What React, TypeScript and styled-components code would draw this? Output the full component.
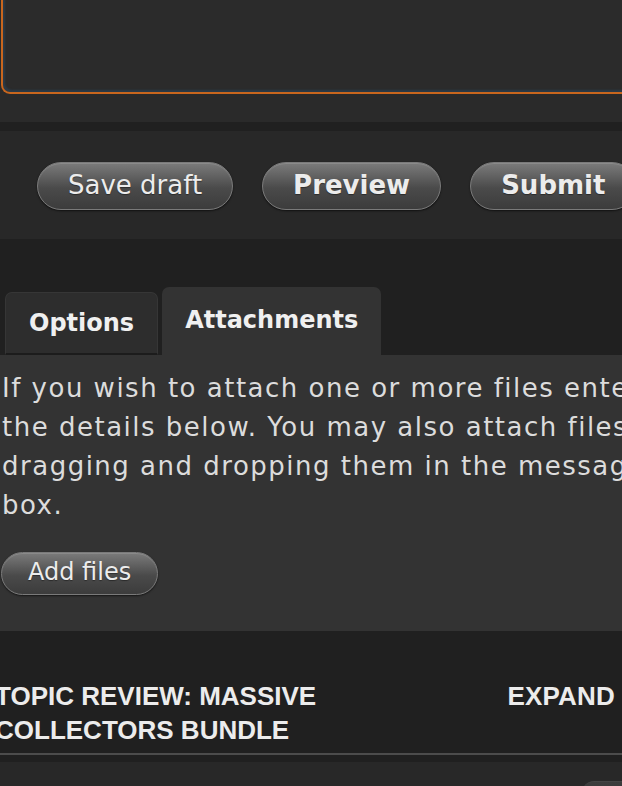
import React from "react";
import styled, { createGlobalStyle } from "styled-components";

const GlobalStyle = createGlobalStyle`
  html, body {
    margin: 0;
    padding: 0;
    background: #202020;
    overflow: hidden;
  }
`;

const Page = styled.div`
  width: 660px;
  background: #202020;
  font-family: "DejaVu Sans", Verdana, sans-serif;
  color: #e6e6e6;
`;

const EditorPanel = styled.div`
  background: #2a2a2a;
  padding: 0 0 28px 1px;
`;

const MessageBox = styled.div`
  height: 92px;
  background: #2b2b2b;
  border: 2px solid #c8661e;
  border-top: 0;
  border-radius: 0 0 0 9px;
  box-shadow: inset 2px -2px 2px rgba(40, 90, 130, 0.35);
`;

const ButtonBar = styled.div`
  margin-top: 9px;
  background: #282828;
  height: 108px;
  box-sizing: border-box;
  display: flex;
  align-items: center;
  gap: 29px;
  padding: 2px 0 0 37px;
`;

const PillButton = styled.button<{ $bold?: boolean; $small?: boolean }>`
  font-family: "DejaVu Sans", Verdana, sans-serif;
  font-size: ${(p) => (p.$small ? 24 : 26)}px;
  font-weight: ${(p) => (p.$bold ? 700 : 400)};
  color: #ececec;
  line-height: 1.15;
  padding: ${(p) => (p.$small ? "6px 26px 7px" : "8px 30px 9px")};
  border-radius: 999px;
  border: 1px solid #7a7a7a;
  background: linear-gradient(#7b7b7b, #4a4a4a 55%, #3c3c3c);
  box-shadow: 0 1px 2px rgba(0, 0, 0, 0.6), inset 0 1px 0 rgba(255, 255, 255, 0.12);
  text-shadow: 0 1px 1px rgba(0, 0, 0, 0.4);
  cursor: pointer;
  white-space: nowrap;
`;

const TabStrip = styled.div`
  display: flex;
  align-items: flex-end;
  gap: 4px;
  padding: 48px 0 0 5px;
`;

const Tab = styled.div<{ $active?: boolean }>`
  font-size: 24px;
  font-weight: 700;
  color: #f0f0f0;
  background: ${(p) => (p.$active ? "#333333" : "#2d2d2d")};
  border-radius: 7px 7px 0 0;
  border: ${(p) => (p.$active ? "none" : "1px solid #363636")};
  border-bottom: ${(p) => (p.$active ? "none" : "2px solid #1c1c1c")};
  height: ${(p) => (p.$active ? 68 : 63)}px;
  padding: 0 23px ${(p) => (p.$active ? 2 : 0)}px;
  display: flex;
  align-items: center;
  box-sizing: border-box;
`;

const TabPanel = styled.div`
  background: #333333;
  padding: 14px 0 36px 1px;
`;

const HelpText = styled.p`
  margin: 0 0 27px 1px;
  width: 690px;
  font-size: 26px;
  line-height: 39px;
  color: #dcdcdc;
  letter-spacing: 1.5px;
`;

const TopicHeader = styled.div`
  display: flex;
  justify-content: space-between;
  align-items: flex-start;
  padding: 48px 45px 6px 0;
  border-bottom: 2px solid #4c4c4c;
  font-family: "Liberation Sans", Arial, sans-serif;
  font-weight: 700;
  font-size: 26px;
  line-height: 34px;
  text-transform: uppercase;
  color: #ececec;
`;

const TopicTitle = styled.div`
  margin-left: -5px;
  max-width: 380px;
`;

const ExpandLink = styled.div`
  letter-spacing: 0.2px;
`;

const ReviewPanel = styled.div`
  margin-top: 7px;
  background: #282828;
  height: 40px;
  display: flex;
  justify-content: flex-end;
  padding: 19px 0 0;
  box-sizing: border-box;
`;

const PostButtonTop = styled.div`
  width: 78px;
  height: 30px;
  border-radius: 12px 0 0 0;
  background: linear-gradient(#3c3c3c, #333);
  border-top: 1px solid #444;
`;

const App = () => {
  return (
    <Page>
      <GlobalStyle />
      <EditorPanel>
        <MessageBox />
      </EditorPanel>
      <ButtonBar>
        <PillButton>Save draft</PillButton>
        <PillButton $bold>Preview</PillButton>
        <PillButton $bold>Submit</PillButton>
      </ButtonBar>
      <TabStrip>
        <Tab>Options</Tab>
        <Tab $active>Attachments</Tab>
      </TabStrip>
      <TabPanel>
        <HelpText>
          If you wish to attach one or more files enter the details below. You may also attach files by dragging and dropping them in the message box.
        </HelpText>
        <PillButton $small>Add files</PillButton>
      </TabPanel>
      <TopicHeader>
        <TopicTitle>Topic review: Massive Collectors Bundle</TopicTitle>
        <ExpandLink>Expand</ExpandLink>
      </TopicHeader>
      <ReviewPanel>
        <PostButtonTop />
      </ReviewPanel>
    </Page>
  );
};

export default App;
